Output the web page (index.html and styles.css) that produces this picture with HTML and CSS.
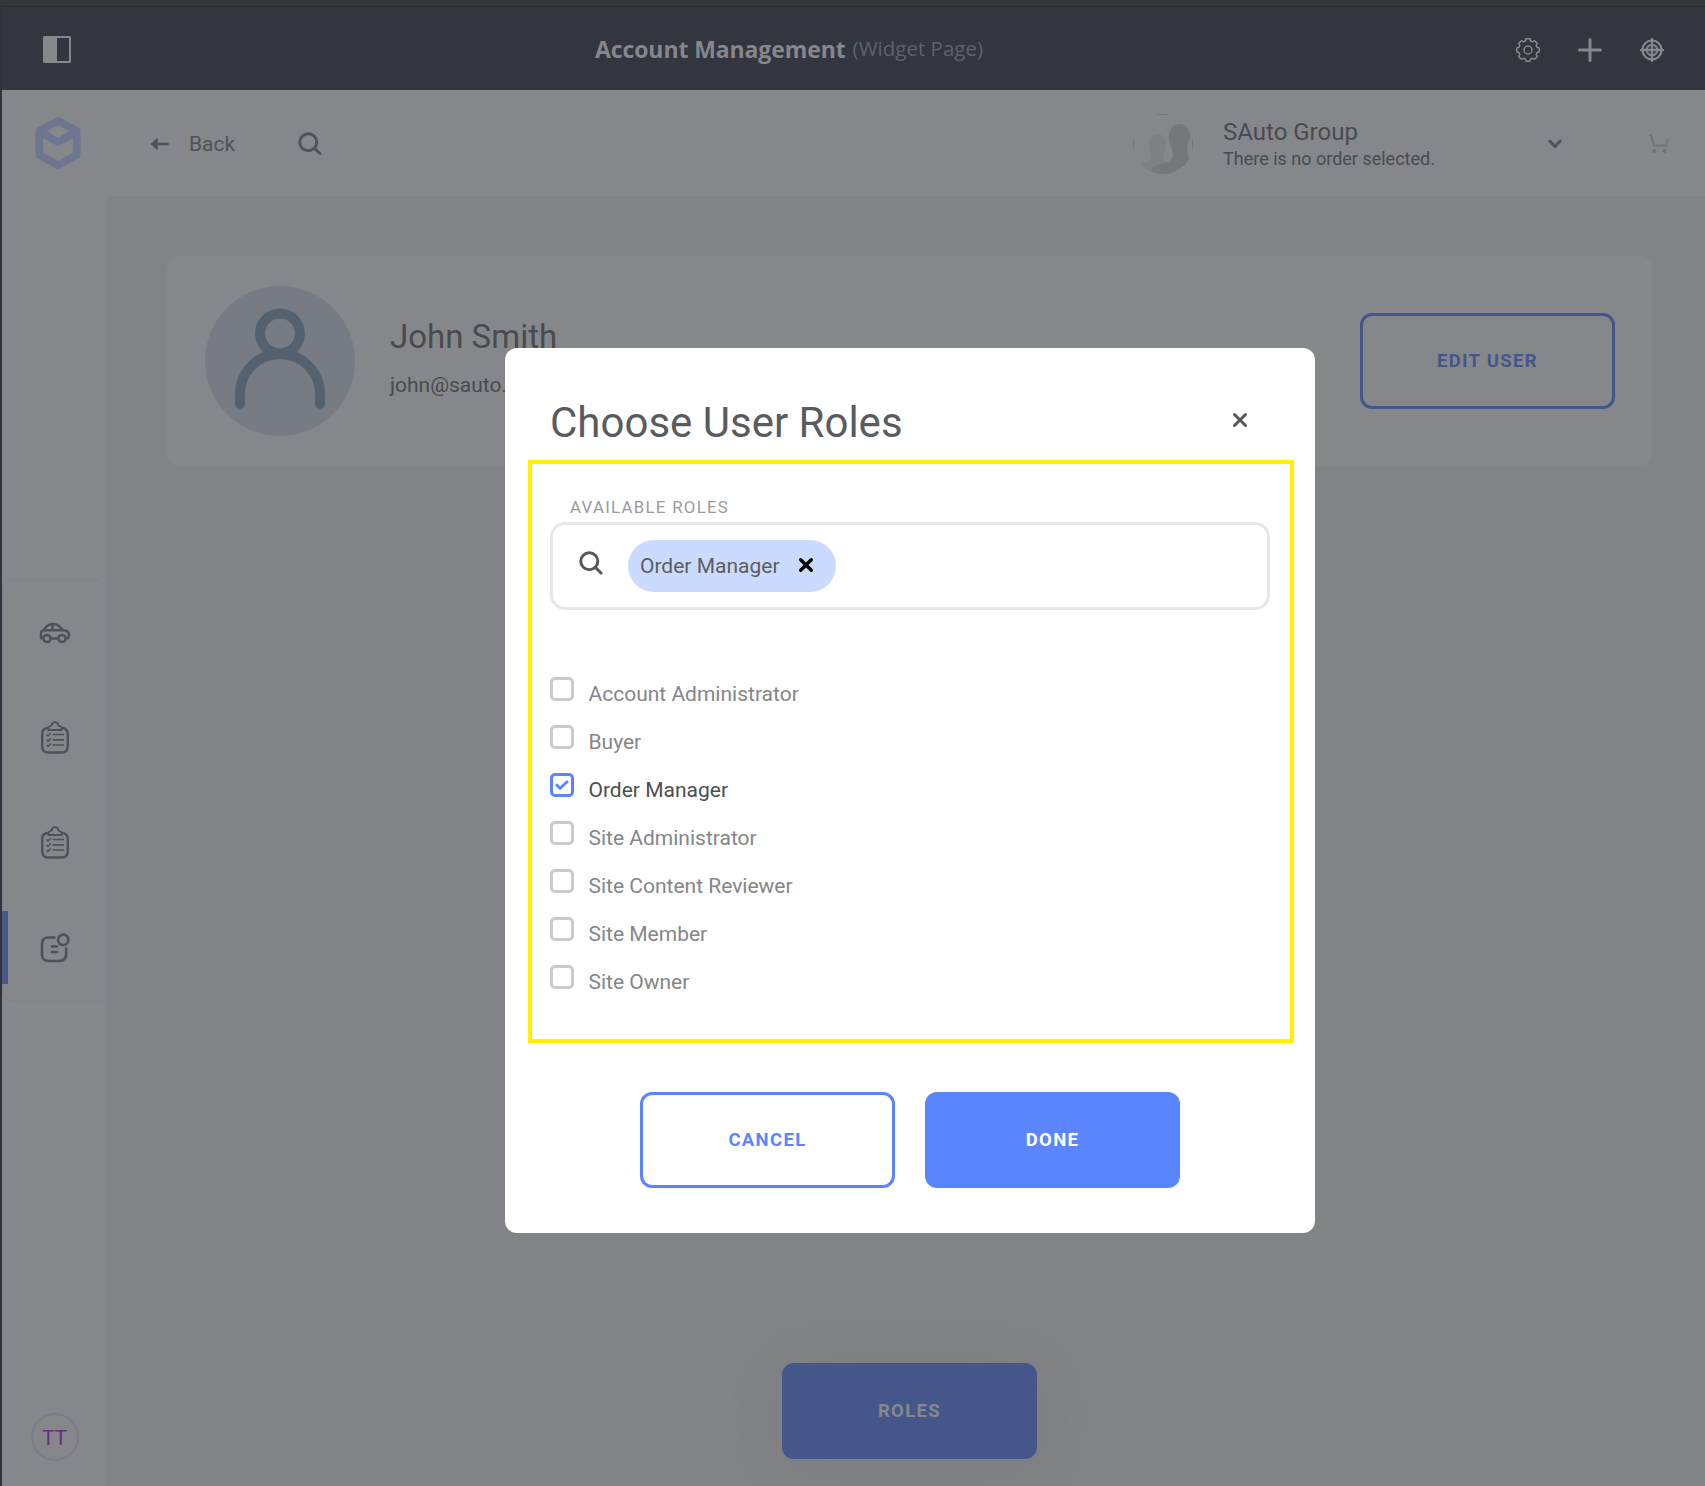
FILE: index.html
```html
<!DOCTYPE html>
<html lang="en">
<head>
<meta charset="utf-8">
<title>Account Management</title>
<link rel="stylesheet" href="styles.css">
</head>
<body>
<div class="app">
  <header class="topbar">
    <svg class="panel-icon" width="28" height="27" viewBox="0 0 28 27"><rect x="1" y="1" width="26" height="25" rx=".5" fill="none" stroke="#86878a" stroke-width="2"/><path d="M1 1h13v25H1z" fill="#86878a"/></svg>
    <div class="page-title"><strong>Account Management</strong><span>(Widget Page)</span></div>
    <div class="top-actions">
      <svg width="24" height="24" viewBox="0 0 24 24" fill="none" stroke="#86878a" stroke-width="1.500" stroke-linejoin="round"><path d="M10 .8h4l.6 2.200 2 .8 2-1.100 2.700 2.700-1.100 2 .8 2 2.200.6v4l-2.200.6-.8 2 1.100 2-2.700 2.700-2-1.100-2 .8-.6 2.200h-4l-.6-2.200-2-.8-2 1.100-2.700-2.700 1.100-2-.8-2L.8 14v-4l2.200-.6.8-2-1.100-2 2.700-2.700 2 1.100 2-.8z"/><circle cx="12" cy="12" r="4"/></svg>
      <svg width="24" height="24" viewBox="0 0 24 24" stroke="#86878a" stroke-width="3" stroke-linecap="round"><path d="M12 1.500v21M1.500 12h21"/></svg>
      <svg width="24" height="24" viewBox="0 0 24 24" fill="none" stroke="#86878a" stroke-linecap="round"><circle cx="12" cy="12" r="9.500" stroke-width="2.200"/><circle cx="12" cy="12" r="5.300" stroke-width="2"/><path d="M12 1v22M1 12h22" stroke-width="2.300"/></svg>
    </div>
  </header>
  <div class="shell">
    <aside class="sidebar">
      <svg class="logo" width="46" height="54" viewBox="0 0 46 54" fill="none" stroke="#6d758f" stroke-width="7.500" stroke-linejoin="round"><path d="M23 4.700 41.700 15v24L23 49.300 4.300 39V15z"/><path d="m5 16 18 10 18-10"/></svg>
      <nav class="nav">
        <a class="nav-item"><svg width="32" height="24" viewBox="0 0 32 24" fill="none" stroke="#4f5156" stroke-width="2.500" stroke-linejoin="round"><path d="M4.500 17.500H3.200Q2 17.500 2 16v-3.500Q2 9.500 5 9.200C7 5 9 3 14 3c5 0 7 2.500 10 6.200 4 .2 6 1.300 6 4.500 0 2.500-.5 3.800-2.500 3.800M12 17.500h7.500M5 9.200h19M13.500 3v6"/><circle cx="8" cy="17.500" r="3.600"/><circle cx="23" cy="17.500" r="3.600"/></svg></a>
        <a class="nav-item"><svg width="28" height="34" viewBox="0 0 28 34" fill="none" stroke="#4f5156" stroke-width="2.400"><path d="M7.500 7C3 7 1.200 9 1.200 13v12c0 4.500 2 6.500 6 6.500h13.600c4 0 6-2 6-6.500V13c0-4-1.800-6-6.300-6"/><path d="M7.500 9V6l3-1.500C11.300 0 16.700 0 17.500 4.500l3 1.500v3z" stroke-width="1.800"/><path d="M11.500 13.500H23M11.500 18.800H23M11.500 24H23" stroke-width="1.700"/><path d="m5.500 13.500 1.500 1.500 2.800-3M5.500 18.800 7 20.300l2.800-3M5.500 24 7 25.500l2.800-3" stroke-width="1.500"/></svg></a>
        <a class="nav-item"><svg width="28" height="34" viewBox="0 0 28 34" fill="none" stroke="#4f5156" stroke-width="2.400"><path d="M7.500 7C3 7 1.200 9 1.200 13v12c0 4.500 2 6.500 6 6.500h13.600c4 0 6-2 6-6.500V13c0-4-1.800-6-6.300-6"/><path d="M7.500 9V6l3-1.500C11.300 0 16.700 0 17.500 4.500l3 1.500v3z" stroke-width="1.800"/><path d="M11.500 13.500H23M11.500 18.800H23M11.500 24H23" stroke-width="1.700"/><path d="m5.500 13.500 1.500 1.500 2.800-3M5.500 18.800 7 20.300l2.800-3M5.500 24 7 25.500l2.800-3" stroke-width="1.500"/></svg></a>
        <a class="nav-item active"><svg width="30" height="30" viewBox="0 0 30 30" fill="none" stroke="#4f5156" stroke-width="2.600" stroke-linecap="round"><path d="M14.500 4.500H9c-5 0-7 2-7 6.500v10c0 5.500 2 7 7 7h10c5 0 7.200-2 7.200-7v-5.500M12 13.500h5M12 19h5"/><circle cx="23.200" cy="6.800" r="5.200"/></svg></a>
      </nav>
      <div class="user-badge">TT</div>
    </aside>
    <main class="main">
      <div class="toolbar">
        <svg class="back-icon" width="18" height="12" viewBox="0 0 18 12"><path d="M0 6 6.200.5v11z" fill="#4f5359" stroke="#4f5359" stroke-linejoin="round"/><path d="M5 6h11.500" stroke="#4f5359" stroke-width="2.600" stroke-linecap="round"/></svg>
        <span class="back">Back</span>
        <svg class="search" width="24" height="24" viewBox="0 0 24 24" fill="none" stroke="#4f5359" stroke-width="3" stroke-linecap="round"><circle cx="10.300" cy="10.300" r="8.500"/><path d="m16.500 16.500 5.500 5"/></svg>
        <svg class="group-avatar" width="60" height="60" viewBox="0 0 60 60"><defs><clipPath id="disc"><circle cx="30" cy="30" r="30"/></clipPath></defs><g clip-path="url(#disc)"><path d="M16 31c0-8 4-11 9-11s8 4 8 11c0 5-2 7-3 10l3 18H0v-5c7-7 18-3 18-13 0-3-2-5-2-10z" fill="#7e8084"/><path d="M36 22c0-8 5-12 11-12s10 5 10 12c0 6-3 8-3 13 0 4 2 6 2 10 0 4-3 7-3 14H18c0-13 21-6 22-18 0-8-4-8-4-19z" fill="#76777b"/><path d="M20 .5h20M.5 25v12M59.500 25v12M20 59.500h20" stroke="#74757a"/></g></svg>
        <div class="group"><div class="group-name">SAuto Group</div><div class="group-note">There is no order selected.</div></div>
        <svg class="chevron" width="14" height="10" viewBox="0 0 14 10" fill="none" stroke="#4f5359" stroke-width="3" stroke-linecap="round" stroke-linejoin="round"><path d="m1.800 2 5.200 5.500L12.200 2"/></svg>
        <svg class="cart" width="20" height="20" viewBox="0 0 20 20" fill="none" stroke="#727377" stroke-width="2" stroke-linecap="round" stroke-linejoin="round"><path d="M1 1.500h1L5 11.500h12l1.500-5.500"/><circle cx="5.300" cy="17" r="2" fill="#727377" stroke="none"/><circle cx="15.500" cy="17" r="2" fill="#727377" stroke="none"/></svg>
      </div>
      <section class="content">
        <div class="profile">
          <svg class="avatar" width="150" height="150" viewBox="0 0 150 150"><circle cx="75" cy="75" r="75" fill="#777b83"/><g fill="none" stroke="#566170" stroke-width="10" stroke-linecap="round"><circle cx="75" cy="47.500" r="20"/><path d="M35 118v-10a40 40 0 0 1 80 0v10"/></g></svg>
          <div class="person"><div class="name">John Smith</div><div class="email">john@sauto.com</div></div>
          <button class="btn outline dim">EDIT USER</button>
        </div>
        <button class="btn filled-dim">ROLES</button>
      </section>
    </main>
  </div>
</div>

<div class="overlay">
  <div class="modal" role="dialog">
    <div class="modal-head"><h1>Choose User Roles</h1>
      <svg width="16" height="16" viewBox="0 0 16 16" stroke="#565859" stroke-width="3" stroke-linecap="round"><path d="m2.500 2.500 11 11m0-11-11 11"/></svg>
    </div>
    <div class="roles">
      <div class="label">AVAILABLE ROLES</div>
      <div class="field">
        <svg width="24" height="24" viewBox="0 0 24 24" fill="none" stroke="#565859" stroke-width="3" stroke-linecap="round"><circle cx="10.300" cy="10.300" r="8.500"/><path d="m16.500 16.500 5.500 5.500"/></svg>
        <div class="chip"><span>Order Manager</span><svg width="16" height="16" viewBox="0 0 16 16" stroke="#000" stroke-width="3.400" stroke-linecap="round"><path d="m2.700 2.700 10.600 10.600m0-10.600L2.700 13.300"/></svg></div>
      </div>
      <ul class="options">
        <li><i class="box"></i><span>Account Administrator</span></li>
        <li><i class="box"></i><span>Buyer</span></li>
        <li class="checked"><i class="box"><svg width="14" height="12" viewBox="0 0 14 12" fill="none" stroke="#5a85ff" stroke-width="2.800"><path d="m1 5.300 4 4L13 2"/></svg></i><span>Order Manager</span></li>
        <li><i class="box"></i><span>Site Administrator</span></li>
        <li><i class="box"></i><span>Site Content Reviewer</span></li>
        <li><i class="box"></i><span>Site Member</span></li>
        <li><i class="box"></i><span>Site Owner</span></li>
      </ul>
    </div>
    <div class="actions"><button class="btn outline">CANCEL</button><button class="btn filled">DONE</button></div>
  </div>
</div>
</body>
</html>
```
FILE: styles.css
```css
* { box-sizing: border-box; }
body { margin: 0; font-family: Roboto, "Liberation Sans", sans-serif; font-size: 21px; color: #494b50; }
svg { display: block; flex: none; }
.app { width: 1705px; height: 1486px; display: flex; flex-direction: column; background: #828386; border-left: 2px solid #32323c; border-top: 6px solid #333739; overflow: hidden; }
.topbar { height: 84px; flex: none; display: flex; align-items: center; background: #33353f; border-top: 1px solid #2d2d2d; padding: 2px 41px 0 41px; }
.page-title { margin-left: 524px; display: flex; align-items: baseline; gap: 7px; font-family: "Open Sans", "Noto Sans", sans-serif; color: #86878a; white-space: nowrap; }
.page-title strong { font-size: 23px; font-weight: 700; letter-spacing: -.1px; }
.page-title span { font-size: 20.500px; color: #5f616d; padding-bottom: 2px; position: relative; top: -2px; }
.top-actions { margin-left: auto; display: flex; gap: 38px; }

.shell { flex: 1; display: flex; min-height: 0; }
.sidebar { width: 105px; flex: none; background: #86878a; display: flex; flex-direction: column; align-items: center; padding: 26px 0 25px; }
.logo { margin-left: 6px; }
.nav { width: 105px; height: 423px; margin-top: 409px; border: 1px solid #7d828f; border-radius: 12px; display: flex; flex-direction: column; }
.nav-item { height: 105.3px; display: flex; align-items: center; justify-content: center; }
.nav-item.active { margin-left: -1px; border-left: 6px solid #45568b; height: 73px; margin-top: 15.500px; padding-right: 5px; }
.user-badge { margin-top: auto; width: 48px; height: 48px; border: 2px solid #7c7d87; border-radius: 50%; color: #64307c; display: flex; align-items: center; justify-content: center; padding-top: 2px; }

.main { flex: 1; display: flex; flex-direction: column; }
.toolbar { height: 106px; flex: none; display: flex; align-items: center; background: #86878a; padding: 2px 36px 0 44px; }
.back { margin-left: 20px; width: 46px; color: #4f5359; }
.search { margin-left: 63px; }
.group-avatar { margin-left: auto; }
.group { width: 325px; margin-left: 30px; white-space: nowrap; }
.group-name { font-size: 24px; line-height: 28px; }
.group-note { font-size: 18px; line-height: 25px; }
.cart { margin-left: 87px; }

.content { flex: 1; display: flex; flex-direction: column; align-items: center; padding: 60px 53px 27px 60px; }
.profile { align-self: stretch; height: 210px; background: #86878a; border-radius: 12px; display: flex; align-items: center; padding: 0 37px 0 38px; }
.person { margin-left: 35px; padding-bottom: 8px; }
.name { font-size: 33px; line-height: 40px; }
.email { margin-top: 16px; line-height: 25px; }
.profile .btn { margin-left: auto; }
.btn { width: 255px; height: 96px; border: 0; border-radius: 12px; font: 700 18.500px Roboto, sans-serif; letter-spacing: 1.350px; padding: 0; }
.outline { background: none; border: 3px solid #5a85ff; color: #5a85ff; }
.outline.dim { border-color: #45568b; color: #45568b; }
.filled { background: #5a85ff; color: #fff; }
.filled-dim { margin-top: auto; background: #45568b; color: #86878a; box-shadow: 0 8px 60px rgba(90, 90, 85, .12); }

.overlay { position: absolute; top: 348px; left: 505px; }
.modal { width: 810px; height: 884.500px; background: #fff; border-radius: 12px; padding: 50px 21px 44.500px 23px; display: flex; flex-direction: column; }
.modal-head { height: 62px; display: flex; justify-content: space-between; padding: 0 46px 0 22px; }
.modal-head svg { margin-top: 14px; }
h1 { margin: 0; font-size: 42px; line-height: 50px; font-weight: 400; color: #595b5c; }
.roles { height: 583px; border: 4px solid #fff200; padding: 33px 20px 0 18px; }
.label { margin-left: 20px; height: 25px; line-height: 20px; font-size: 16.800px; letter-spacing: 1.300px; color: #999b9c; }
.field { height: 88px; border: 3px solid #e7e7e7; border-radius: 15px; display: flex; align-items: center; padding-left: 26px; }
.field > svg { margin-top: -6px; }
.chip { margin-left: 25px; width: 208px; height: 52px; border-radius: 26px; background: #cbdaff; display: flex; align-items: center; padding-left: 12px; color: #5c5e60; }
.chip span { width: 138px; white-space: nowrap; }
.chip svg { margin-left: 20px; margin-top: -2px; }
.options { list-style: none; margin: 67px 0 0; padding: 0; }
.options li { height: 48px; display: flex; gap: 14.500px; color: #848689; }
.options span { line-height: 35px; }
.box { width: 24px; height: 24px; border: 3px solid #cbcbcb; border-radius: 5px; display: flex; align-items: center; justify-content: center; }
.options .checked { color: #4c4e50; }
.checked .box { border-color: #5a85ff; }
.actions { margin-top: auto; margin-right: 2px; display: flex; justify-content: center; gap: 30px; }
```
